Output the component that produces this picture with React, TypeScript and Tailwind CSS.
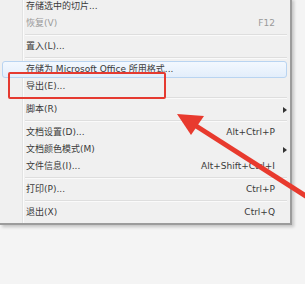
import React from "react";

type Item =
  | { type: "sep" }
  | { type: "item"; label: string; shortcut?: string; disabled?: boolean; submenu?: boolean; hover?: boolean };

const items: Item[] = [
  { type: "item", label: "存储选中的切片..." },
  { type: "item", label: "恢复(V)", shortcut: "F12", disabled: true },
  { type: "sep" },
  { type: "item", label: "置入(L)..." },
  { type: "sep" },
  { type: "item", label: "存储为 Microsoft Office 所用格式...", hover: true },
  { type: "item", label: "导出(E)..." },
  { type: "sep" },
  { type: "item", label: "脚本(R)", submenu: true },
  { type: "sep" },
  { type: "item", label: "文档设置(D)...", shortcut: "Alt+Ctrl+P" },
  { type: "item", label: "文档颜色模式(M)", submenu: true },
  { type: "item", label: "文件信息(I)...", shortcut: "Alt+Shift+Ctrl+I" },
  { type: "sep" },
  { type: "item", label: "打印(P)...", shortcut: "Ctrl+P" },
  { type: "sep" },
  { type: "item", label: "退出(X)", shortcut: "Ctrl+Q" },
];

export default function App() {
  return (
    <div
      className="relative w-[305px] h-[284px] overflow-hidden bg-[#f4f4f4]"
      style={{ fontFamily: '"DejaVu Sans", "Noto Sans CJK SC", sans-serif' }}
    >
      <div className="relative w-[292px] -mt-[2px] bg-[#f0f0f0] border-r-2 border-b-2 border-[#9c9c9c] shadow-[2px_2px_3px_rgba(0,0,0,0.2)] pb-[2px]">
        {/* gutter line */}
        <div className="absolute left-[22px] top-0 bottom-0 w-[1px] bg-[#e2e3e3]" />
        <div className="absolute left-[23px] top-0 bottom-0 w-[1px] bg-[#fbfbfb]" />
        {items.map((it, i) => {
          if (it.type === "sep") {
            return (
              <div key={i} className="h-[6px] flex flex-col justify-center pl-[25px] pr-[3px]">
                <div className="h-[1px] bg-[#dedede]" />
                <div className="h-[1px] bg-[#fafafa]" />
              </div>
            );
          }
          if (it.hover) {
            return (
              <div
                key={i}
                className="relative h-[17px] ml-[2px] mr-[3px] flex items-center pl-[23px] rounded-[3px] border border-[#b9d4f1] bg-gradient-to-b from-[#f3f8fe] to-[#e3eefb] text-[9px] text-[#3a3a3a] leading-none whitespace-nowrap"
              >
                {it.label}
              </div>
            );
          }
          return (
            <div
              key={i}
              className={`relative h-[17px] flex items-center pl-[26px] text-[9px] leading-none whitespace-nowrap ${
                it.disabled ? "text-[#9a9a9a]" : "text-[#3a3a3a]"
              }`}
            >
              <span className="flex-1">{it.label}</span>
              {it.shortcut && <span>{it.shortcut}</span>}
              <span className="w-[15px] flex justify-center">
                {it.submenu && (
                  <svg width="4" height="6" viewBox="0 0 4 6" className="ml-[4px]">
                    <polygon points="0,0 4,3 0,6" fill="#333" />
                  </svg>
                )}
              </span>
            </div>
          );
        })}
      </div>

      {/* red highlight box */}
      <div className="absolute left-[8px] top-[72px] w-[158px] h-[27px] border-2 border-[#e53a30] rounded-[2px]" />

      {/* red arrow */}
      <svg className="absolute left-0 top-0" width="305" height="284" viewBox="0 0 305 284">
        <line x1="193" y1="124" x2="312" y2="200" stroke="#e83a2e" strokeWidth="5" />
        <polygon points="177,114 204,116 191,135" fill="#e83a2e" />
      </svg>
    </div>
  );
}
